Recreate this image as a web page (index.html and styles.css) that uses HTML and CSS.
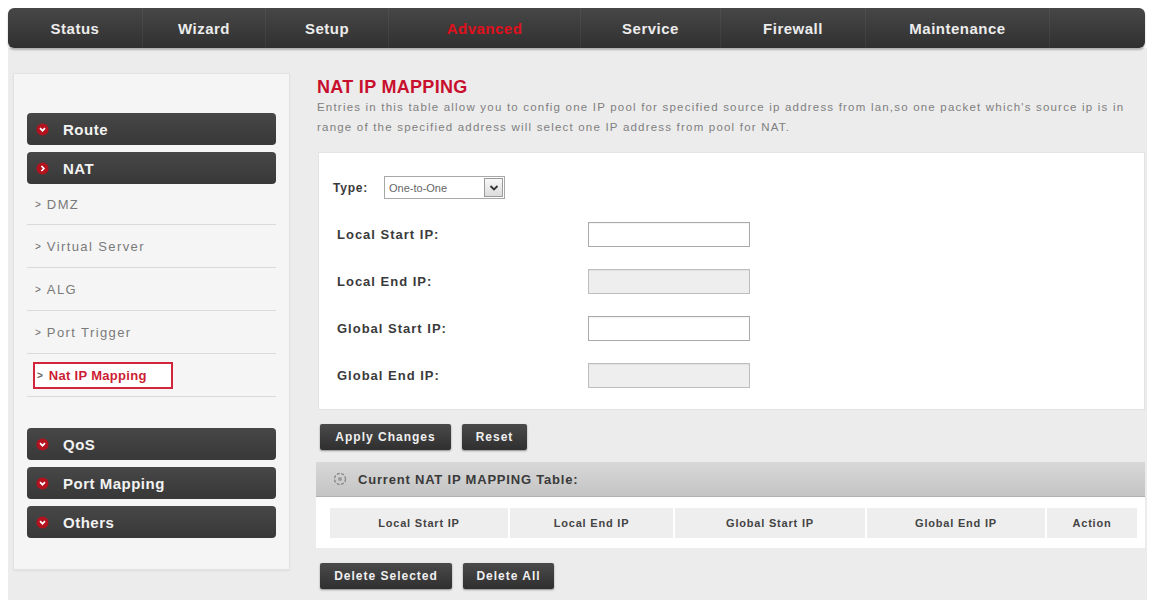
FILE: index.html
```html
<!DOCTYPE html>
<html>
<head>
<meta charset="utf-8">
<link rel="stylesheet" href="styles.css">
</head>
<body>
<div class="wrap">
  <div class="header">
    <nav class="nav">
      <a class="nav-item w-status">Status</a>
      <a class="nav-item w-wizard">Wizard</a>
      <a class="nav-item w-setup">Setup</a>
      <a class="nav-item w-adv active">Advanced</a>
      <a class="nav-item w-service">Service</a>
      <a class="nav-item w-fw">Firewall</a>
      <a class="nav-item w-maint">Maintenance</a>
      <span class="nav-rest"></span>
    </nav>
  </div>
  <div class="content">
    <aside class="sidebar">
      <div class="menu-head"><svg class="ico" viewBox="0 0 14 14"><circle cx="7" cy="7" r="6.5" fill="#b3121f"/><path d="M4.3 5.6 L7 8.3 L9.7 5.6" fill="none" stroke="#fff" stroke-width="1.8"/></svg>Route</div>
      <div class="menu-head"><svg class="ico" viewBox="0 0 14 14"><circle cx="7" cy="7" r="6.5" fill="#b3121f"/><path d="M5.8 4.3 L8.5 7 L5.8 9.7" fill="none" stroke="#fff" stroke-width="1.8"/></svg>NAT</div>
      <ul class="submenu">
        <li class="sub first"><span class="gt">&gt;</span>DMZ</li>
        <li class="sub"><span class="gt">&gt;</span>Virtual Server</li>
        <li class="sub"><span class="gt">&gt;</span>ALG</li>
        <li class="sub"><span class="gt">&gt;</span>Port Trigger</li>
        <li class="sub"><span class="sel"><span class="gt">&gt;</span>Nat IP Mapping</span></li>
      </ul>
      <div class="menu-head gap"><svg class="ico" viewBox="0 0 14 14"><circle cx="7" cy="7" r="6.5" fill="#b3121f"/><path d="M4.3 5.6 L7 8.3 L9.7 5.6" fill="none" stroke="#fff" stroke-width="1.8"/></svg>QoS</div>
      <div class="menu-head"><svg class="ico" viewBox="0 0 14 14"><circle cx="7" cy="7" r="6.5" fill="#b3121f"/><path d="M4.3 5.6 L7 8.3 L9.7 5.6" fill="none" stroke="#fff" stroke-width="1.8"/></svg>Port Mapping</div>
      <div class="menu-head"><svg class="ico" viewBox="0 0 14 14"><circle cx="7" cy="7" r="6.5" fill="#b3121f"/><path d="M4.3 5.6 L7 8.3 L9.7 5.6" fill="none" stroke="#fff" stroke-width="1.8"/></svg>Others</div>
    </aside>
    <main class="main">
      <h1 class="title">NAT IP MAPPING</h1>
      <p class="desc">Entries in this table allow you to config one IP pool for specified source ip address from lan,so one packet which's source ip is in range of the specified address will select one IP address from pool for NAT.</p>
      <div class="form">
        <div class="row">
          <span class="type-label">Type:</span>
          <span class="select"><span class="sel-text">One-to-One</span><span class="sel-btn"><svg viewBox="0 0 12 12" width="12" height="12"><path d="M2.5 4 L6 7.5 L9.5 4" fill="none" stroke="#333" stroke-width="1.8"/></svg></span></span>
        </div>
        <div class="row"><span class="label">Local Start IP:</span><span class="input"></span></div>
        <div class="row"><span class="label">Local End IP:</span><span class="input disabled"></span></div>
        <div class="row"><span class="label">Global Start IP:</span><span class="input"></span></div>
        <div class="row"><span class="label">Global End IP:</span><span class="input disabled"></span></div>
      </div>
      <div class="buttons">
        <button class="btn b-apply">Apply Changes</button>
        <button class="btn b-reset">Reset</button>
      </div>
      <div class="tbl-head">
        <svg class="tbl-ico" viewBox="0 0 14 14"><circle cx="7" cy="7" r="5.5" fill="none" stroke="#8a8a8a" stroke-width="1.4" stroke-dasharray="3 1.4"/><circle cx="7" cy="7" r="2" fill="#9a9a9a"/></svg>
        Current NAT IP MAPPING Table:
      </div>
      <div class="tbl-wrap">
        <div class="tbl">
          <div class="th c1">Local Start IP</div>
          <div class="th c2">Local End IP</div>
          <div class="th c3">Global Start IP</div>
          <div class="th c4">Global End IP</div>
          <div class="th c5">Action</div>
        </div>
      </div>
      <div class="buttons bottom">
        <button class="btn b-delsel">Delete Selected</button>
        <button class="btn b-delall">Delete All</button>
      </div>
    </main>
  </div>
</div>
</body>
</html>
```
FILE: styles.css
```css
* { box-sizing: border-box; }
body {
  margin: 0;
  background: #ffffff;
  font-family: "Liberation Sans", Arial, sans-serif;
  height: 600px;
  overflow: hidden;
}
.wrap {
  margin-left: 8px;
  width: 1139px;
  background: #ececec;
  height: 600px;
}
.header {
  background: #ffffff;
  padding-top: 8px;
}
.nav {
  display: flex;
  height: 40px;
  border-radius: 6px;
  background: linear-gradient(#474747, #303030);
  box-shadow: 0 2px 2px rgba(0,0,0,0.25);
  margin-right: 2px;
  overflow: hidden;
}
.nav-item {
  display: flex;
  align-items: center;
  justify-content: center;
  color: #ececec;
  font-weight: bold;
  font-size: 15px;
  letter-spacing: 0.5px;
  border-right: 1px solid rgba(255,255,255,0.05);
}
.nav-item.active { color: #e0101c; }
.w-status { width: 135px; }
.w-wizard { width: 123px; }
.w-setup { width: 123px; }
.w-adv { width: 192px; }
.w-service { width: 140px; }
.w-fw { width: 145px; }
.w-maint { width: 184px; }
.nav-rest { flex: 1; }

.content {
  display: flex;
  align-items: flex-start;
  padding: 25px 2px 0 5px;
  gap: 26px;
}
.sidebar {
  width: 277px;
  height: 497px;
  background: #f5f5f5;
  border: 1px solid #e2e2e2;
  box-shadow: 0 1px 2px rgba(0,0,0,0.06);
  padding: 39px 13px 0 13px;
}
.menu-head {
  display: flex;
  align-items: center;
  height: 32px;
  border-radius: 4px;
  background: linear-gradient(#474747, #383838);
  color: #f2f2f2;
  font-weight: bold;
  font-size: 15px;
  letter-spacing: 0.5px;
  padding-left: 9px;
  margin-bottom: 7px;
}
.menu-head .ico { width: 13px; height: 13px; margin-right: 14px; }
.menu-head.gap { margin-top: 31px; }
.submenu {
  list-style: none;
  margin: -7px 0 0 0;
  padding: 0;
}
.sub {
  display: flex;
  align-items: center;
  height: 43px;
  border-bottom: 1px solid #dadada;
  color: #7a7a7a;
  font-size: 13px;
  letter-spacing: 1.4px;
  padding-left: 8px;
}
.sub.first { height: 41px; }
.gt { font-size: 10px; margin-right: 6px; letter-spacing: 0; color: #666; }
.sel {
  display: flex;
  align-items: center;
  border: 2px solid #d2253c;
  height: 27px;
  width: 140px;
  margin-left: -2px;
  padding-left: 2px;
  color: #cc1d33;
  font-weight: bold;
  letter-spacing: 0.3px;
  background: #fff;
}

.main { flex: 1; padding-top: 4px; }
.title {
  margin: 0;
  font-size: 18px;
  line-height: 20px;
  color: #c8102e;
  letter-spacing: 0.3px;
  padding-left: 1px;
}
.desc {
  margin: 0;
  font-size: 11.5px;
  line-height: 20px;
  color: #808080;
  letter-spacing: 1.2px;
  padding-left: 1px;
  padding-right: 10px;
}
.form {
  margin: 15px 0 0 2px;
  height: 258px;
  background: #ffffff;
  border: 1px solid #e3e3e3;
  padding-top: 11px;
}
.row {
  display: flex;
  align-items: center;
  height: 47px;
  padding-left: 18px;
}
.label {
  width: 251px;
  font-weight: bold;
  font-size: 13px;
  letter-spacing: 1px;
  color: #3a3a3a;
}
.type-label {
  font-weight: bold;
  font-size: 12px;
  letter-spacing: 0.8px;
  color: #3a3a3a;
  margin-left: -4px;
  width: 51px;
}
.select {
  display: flex;
  align-items: center;
  width: 121px;
  height: 23px;
  border: 1px solid #a8a8a8;
  background: #fff;
}
.sel-text {
  flex: 1;
  font-size: 11px;
  color: #666;
  padding-left: 4px;
}
.sel-btn {
  display: flex;
  align-items: center;
  justify-content: center;
  width: 19px;
  height: 19px;
  margin-right: 1px;
  border: 1px solid #9a9a9a;
  background: linear-gradient(#f8f8f8, #dcdcdc);
}
.input {
  width: 162px;
  height: 25px;
  border: 1px solid #aaaaaa;
  background: #fff;
  box-shadow: inset 0 1px 1px rgba(0,0,0,0.05);
}
.input.disabled { background: #eeeeee; border-color: #bdbdbd; }

.buttons {
  display: flex;
  gap: 11px;
  margin-top: 14px;
  padding-left: 4px;
}
.btn {
  height: 26px;
  border: none;
  border-radius: 2px;
  background: linear-gradient(#4a4a4a, #2f2f2f);
  box-shadow: 0 1px 2px rgba(0,0,0,0.4);
  color: #f0f0f0;
  font-family: "Liberation Sans", Arial, sans-serif;
  font-weight: bold;
  font-size: 12px;
  letter-spacing: 1px;
  padding: 0;
}
.b-apply { width: 131px; }
.b-reset { width: 65px; }
.b-delsel { width: 132px; }
.b-delall { width: 91px; }
.bottom { margin-top: 15px; }

.tbl-head {
  display: flex;
  align-items: center;
  height: 35px;
  margin-top: 12px;
  background: linear-gradient(#d8d8d8, #c4c4c4);
  border-bottom: 1px solid #b0b0b0;
  color: #3a3a3a;
  font-weight: bold;
  font-size: 13px;
  letter-spacing: 0.8px;
  padding-left: 17px;
}
.tbl-ico { width: 14px; height: 14px; margin-right: 11px; }
.tbl-wrap {
  background: #ffffff;
  padding: 11px 8px 10px 14px;
}
.tbl {
  display: flex;
  gap: 2px;
  height: 30px;
}
.th {
  display: flex;
  align-items: center;
  justify-content: center;
  background: #eeeeee;
  color: #444;
  font-weight: bold;
  font-size: 11px;
  letter-spacing: 0.8px;
}
.c1 { width: 178px; }
.c2 { width: 163px; }
.c3 { width: 190px; }
.c4 { width: 178px; }
.c5 { flex: 1; }
```
